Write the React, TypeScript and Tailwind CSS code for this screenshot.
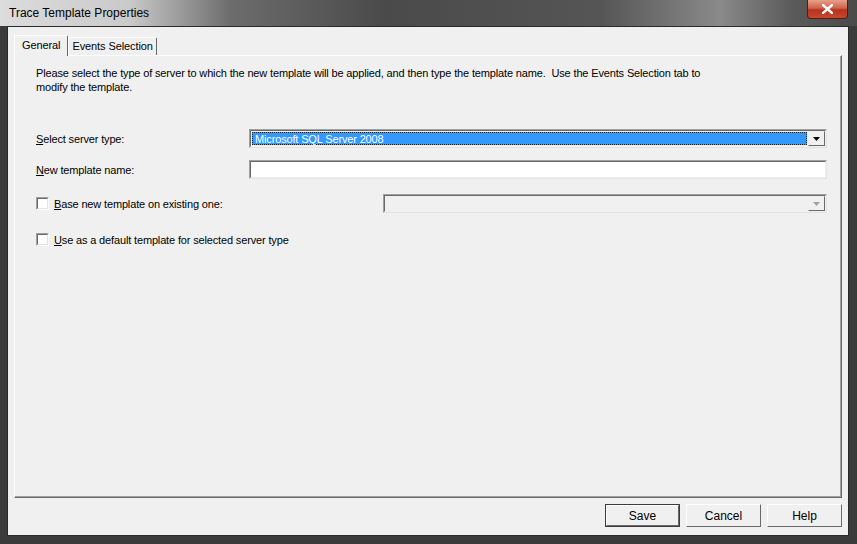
import React from 'react';

const font = { fontFamily: '"Liberation Sans", Arial, sans-serif' };

// sunken 3D edge used by combo / text boxes
const Sunken: React.FC<{ className?: string; children?: React.ReactNode }> = ({ className = '', children }) => (
  <div className={`border border-t-[#a0a0a0] border-l-[#a0a0a0] border-r-[#e3e3e3] border-b-[#e3e3e3] ${className}`}>
    <div className="h-full w-full border border-t-[#696969] border-l-[#696969] border-r-[#f0f0f0] border-b-[#f0f0f0]">{children}</div>
  </div>
);

const Arrow: React.FC<{ disabled?: boolean }> = ({ disabled }) => (
  <div className="flex h-full w-[17px] items-center justify-center border border-t-[#f0f0f0] border-l-[#f0f0f0] border-r-[#696969] border-b-[#696969] bg-[#f0f0f0]">
    <svg width="7" height="4" viewBox="0 0 7 4">
      <path d="M0 0h7L3.5 4z" fill={disabled ? '#a0a0a0' : '#000'} />
    </svg>
  </div>
);

const Checkbox: React.FC = () => (
  <div className="h-[13px] w-[13px] border border-t-[#a0a0a0] border-l-[#a0a0a0] border-r-[#fff] border-b-[#fff]">
    <div className="h-full w-full border border-t-[#696969] border-l-[#696969] border-r-[#e3e3e3] border-b-[#e3e3e3] bg-white" />
  </div>
);

const Btn: React.FC<{ label: string; primary?: boolean }> = ({ label, primary }) => (
  <div className={`h-[23px] w-[75px] ${primary ? 'border border-[#3c3c3c]' : ''}`}>
    <div className="flex h-full w-full items-center justify-center border border-t-[#fff] border-l-[#fff] border-r-[#696969] border-b-[#696969] bg-[#f0f0f0] text-[12px] text-black">
      {label}
    </div>
  </div>
);

export default function App() {
  return (
    <div style={font} className="relative flex h-[544px] w-[857px] flex-col overflow-hidden bg-[#3b3b3b]">
      {/* title bar */}
      <div className="relative flex h-[26px] shrink-0 items-center bg-[linear-gradient(90deg,#dcdcdc_0%,#cacaca_15%,#6c6c6c_27%,#4a4a4a_45%,#555_70%,#8a8a8a_84%,#5c5c5c_92%,#4a4a4a_100%)] pl-[9px]">
        <span className="text-[12px] text-black">Trace Template Properties</span>
        <div className="absolute right-[9px] top-0 flex h-[19px] w-[41px] items-center justify-center rounded-b-[4px] border border-t-0 border-[#5a1a10] bg-[linear-gradient(180deg,#e8a08a_0%,#d0624a_45%,#b8321c_55%,#c8482e_100%)]">
          <svg width="11" height="10" viewBox="0 0 11 10">
            <path d="M1 1l9 8M10 1L1 9" stroke="#fff" strokeWidth="2.4" strokeLinecap="square" />
          </svg>
        </div>
      </div>

      {/* client area */}
      <div className="mb-[8px] ml-[7px] mr-[8px] flex flex-1 flex-col border border-[#2a2a2a] bg-[#f0f0f0] px-[6px] pt-[8px]">
        {/* tabs */}
        <div className="flex h-[20px] items-end text-[11px] tracking-[-0.1px]">
          <div className="relative z-10 -mb-px flex h-[21px] items-center rounded-t-[2px] border border-b-0 border-t-[#fff] border-l-[#fff] border-r-[#696969] bg-[#f0f0f0] px-[7px] pb-[2px]">
            General
          </div>
          <div className="flex h-[18px] items-center rounded-t-[2px] border border-b-0 border-t-[#fff] border-l-[#fff] border-r-[#696969] px-[3px]">
            Events Selection
          </div>
        </div>

        {/* panel */}
        <div className="h-[443px] border border-t-[#fff] border-l-[#fff] border-r-[#696969] border-b-[#696969]">
          <div className="h-full border-r border-b border-r-[#a0a0a0] border-b-[#a0a0a0] pl-[21px] pr-[13px] pt-[10px] text-[11px] leading-[14px] tracking-[-0.15px] text-black">
            <p className="w-[680px]">
              Please select the type of server to which the new template will be applied, and then type the template name.&nbsp; Use the Events Selection tab to modify the template.
            </p>

            <div className="mt-[35px] flex h-[19px] items-center">
              <span className="w-[213px]"><u>S</u>elect server type:</span>
              <Sunken className="h-[19px] flex-1">
                <div className="flex h-full items-stretch">
                  <div className="m-[1px] flex flex-1 items-center border border-dotted border-[#222] bg-[#3399ff] pl-[2px] text-white">
                    Microsoft SQL Server 2008
                  </div>
                  <Arrow />
                </div>
              </Sunken>
            </div>

            <div className="mt-[12px] flex h-[19px] items-center">
              <span className="w-[213px]"><u>N</u>ew template name:</span>
              <Sunken className="h-[19px] flex-1">
                <div className="h-full bg-white" />
              </Sunken>
            </div>

            <div className="mt-[15px] flex h-[19px] items-center">
              <Checkbox />
              <span className="ml-[5px] w-[329px]"><u>B</u>ase new template on existing one:</span>
              <Sunken className="h-[19px] flex-1">
                <div className="flex h-full justify-end bg-[#f0f0f0]">
                  <Arrow disabled />
                </div>
              </Sunken>
            </div>

            <div className="mt-[20px] flex h-[13px] items-center">
              <Checkbox />
              <span className="ml-[5px]"><u>U</u>se as a default template for selected server type</span>
            </div>
          </div>
        </div>

        {/* buttons */}
        <div className="mt-[6px] flex justify-end gap-[6px]">
          <Btn label="Save" primary />
          <Btn label="Cancel" />
          <Btn label="Help" />
        </div>
      </div>
    </div>
  );
}
